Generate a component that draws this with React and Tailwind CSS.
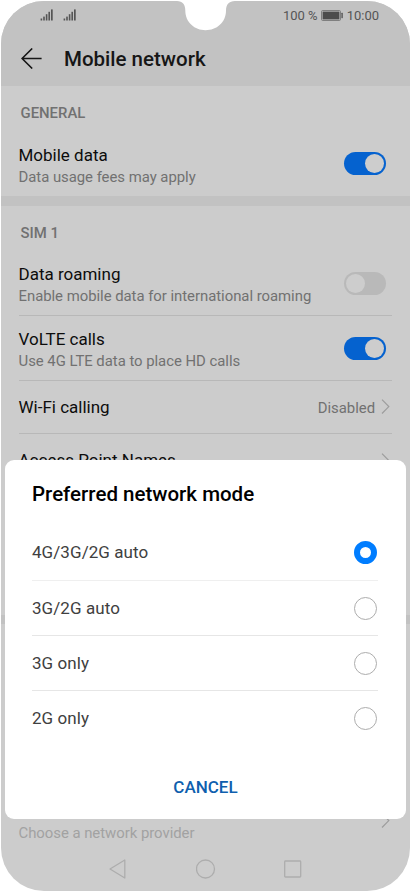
import React, { useState } from 'react'

const modes = ['4G/3G/2G auto', '3G/2G auto', '3G only', '2G only']

function Signal() {
    return (
        <svg className="w-[14px] h-3" viewBox="0 0 14 12" fill="#555">
            <rect x="0.6" y="9.5" width="1.6" height="2" />
            <rect x="3.2" y="7.6" width="1.6" height="3.9" />
            <rect x="5.8" y="5.2" width="1.6" height="6.3" />
            <rect x="8.4" y="2.8" width="1.6" height="8.7" />
            <rect x="11" y="0.4" width="1.7" height="11.1" />
        </svg>
    )
}

function Battery() {
    return (
        <svg className="w-[22px] h-[11px] ml-[3px] mr-[4px]" viewBox="0 0 22 11">
            <rect x="0.5" y="0.5" width="19" height="10" rx="1.2" fill="none" stroke="#777" strokeWidth="0.9" />
            <rect x="1.6" y="1.6" width="16.8" height="7.8" fill="#4c4c4c" />
            <rect x="20.4" y="2.8" width="1.4" height="5.4" rx="0.4" fill="#555" />
        </svg>
    )
}

function Chevron() {
    return (
        <svg className="w-[9px] h-4 mr-[2px] shrink-0" viewBox="0 0 9 16" fill="none" stroke="#9d9d9d" strokeWidth="1.2">
            <path d="M1 0.7L7.8 7.6L1 14.5" />
        </svg>
    )
}

function Toggle({ on, onClick }) {
    return (
        <button
            onClick={onClick}
            className={`flex items-center shrink-0 w-[42px] h-[23px] px-[2px] rounded-full ${on ? 'justify-end bg-[#0562cf]' : 'justify-start bg-[#b9b9b9]'}`}
        >
            <span className="w-[19px] h-[19px] rounded-full bg-[#cdcdcd]" />
        </button>
    )
}

function SwitchRow({ title, note, initial }) {
    const [on, setOn] = useState(initial)
    return (
        <div className="flex items-center justify-between h-full pr-[6px]">
            <div className="pt-[4px]">
                <div className="text-[17px] leading-[22px] text-[#0c0c0c]">{title}</div>
                <div className="text-[14.9px] leading-[22px] tracking-[-0.03px] text-[#717171] whitespace-nowrap">{note}</div>
            </div>
            <Toggle on={on} onClick={() => setOn(!on)} />
        </div>
    )
}

function Radio({ checked }) {
    return (
        <span
            className={`w-[23px] h-[23px] rounded-full ${checked ? 'border-[6px] border-[#007dff]' : 'border border-[#adadad]'}`}
        />
    )
}

export default function App() {
    const [mode, setMode] = useState(modes[0])

    return (
        <div className="w-[411px] h-[892px] bg-white p-px font-['Roboto',sans-serif]">
            <div className="relative flex flex-col w-[409px] h-[890px] bg-[#ccc] rounded-[43px] overflow-hidden">
                <header className="h-[85px] shrink-0 bg-[#c2c2c2]">
                    <div className="flex items-center justify-between h-[29px] pl-[39px] pr-[31px]">
                        <div className="flex gap-[9px] pb-px">
                            <Signal />
                            <Signal />
                        </div>
                        <div className="flex items-center text-[13px] text-[#555] whitespace-nowrap">
                            100 %
                            <Battery />
                            10:00
                        </div>
                    </div>
                    <div className="flex items-center h-[57px] pl-5">
                        <svg className="w-[21px] h-[21px]" viewBox="0 0 21 21" fill="none" stroke="#161616" strokeWidth="1.6">
                            <path d="M20.6 10.5H1M11.2 0.5L1.1 10.5L11.2 20.5" />
                        </svg>
                        <h1 className="ml-[22px] pt-[2px] text-[20.5px] font-medium text-[#161616]">Mobile network</h1>
                    </div>
                </header>

                <section className="h-[110px] shrink-0 pl-[17.5px] pr-[18px]">
                    <h2 className="h-[45px] pt-4 pl-[2px] text-[14.9px] font-medium text-[#717171]">GENERAL</h2>
                    <div className="h-[65px]">
                        <SwitchRow title="Mobile data" note="Data usage fees may apply" initial={true} />
                    </div>
                </section>
                <div className="h-[10px] shrink-0 bg-[#c2c2c2]" />

                <section className="h-[409px] shrink-0 pl-[17.5px] pr-[18px]">
                    <h2 className="h-[45px] pt-4 pl-[2px] text-[14.9px] font-medium text-[#717171]">SIM 1</h2>
                    <div className="h-[65px] border-b border-[#b8b8b8]">
                        <SwitchRow title="Data roaming" note="Enable mobile data for international roaming" initial={false} />
                    </div>
                    <div className="h-[65px] border-b border-[#b8b8b8]">
                        <SwitchRow title="VoLTE calls" note="Use 4G LTE data to place HD calls" initial={true} />
                    </div>
                    <div className="flex items-center h-[53px] border-b border-[#b8b8b8]">
                        <span className="grow pt-[2px] text-[17px] text-[#0c0c0c]">Wi-Fi calling</span>
                        <span className="mr-[6px] pt-[2px] text-[14.9px] tracking-[-0.03px] text-[#717171]">Disabled</span>
                        <Chevron />
                    </div>
                    <div className="flex items-center justify-between h-[53px]">
                        <span className="text-[17px] text-[#0c0c0c]">Access Point Names</span>
                        <Chevron />
                    </div>
                </section>
                <div className="h-[9px] shrink-0 bg-[#c2c2c2]" />

                <section className="flex items-end justify-between h-[220px] shrink-0 pl-[17.5px] pr-[18px]">
                    <span className="text-[14.9px] leading-[22px] tracking-[-0.03px] text-[#a2a2a2]">Choose a network provider</span>
                    <div className="flex h-[31px]">
                        <Chevron />
                    </div>
                </section>

                <nav className="flex items-center grow gap-[69px] pl-[107px] pt-[2px]">
                    <svg className="w-[19px] h-5" viewBox="0 0 19 20" fill="none" stroke="#adadad" strokeWidth="1.3" strokeLinejoin="round">
                        <path d="M16.8 1V19L2 10Z" />
                    </svg>
                    <svg className="w-5 h-5" viewBox="0 0 20 20" fill="none" stroke="#adadad" strokeWidth="1.3">
                        <circle cx="9.5" cy="10" r="9" />
                    </svg>
                    <svg className="-ml-px w-[18px] h-[18px]" viewBox="0 0 18 18" fill="none" stroke="#adadad" strokeWidth="1.3">
                        <rect x="0.7" y="1" width="16" height="16" rx="0.8" />
                    </svg>
                </nav>

                {/* camera notch */}
                <svg className="absolute top-0 left-[174px] w-[62px] h-[30px]" viewBox="0 0 62 30" fill="#fff">
                    <path d="M2 0C7.5 0 10.3 3.5 10.3 9.5C10.3 21.5 20 29.2 30.5 29.2C41.5 29.2 51 21.5 51 9.5C51 3.5 54 0 60 0Z" />
                </svg>

                <div className="absolute left-1 top-[459px] w-[401px] h-[359px] pl-[27px] pr-[28px] bg-white rounded-[9px]">
                    <h3 className="flex items-center h-[65px] pt-[3px] text-[20.5px] font-medium text-black">Preferred network mode</h3>
                    <div>
                        {modes.map(m => (
                            <button
                                key={m}
                                onClick={() => setMode(m)}
                                className="flex items-center justify-between w-full h-[55px] pr-[1.5px] text-[17px] tracking-[0.07px] text-[#404040] border-b border-[#e6e6e6] first:h-[56px] first:border-[#efefef] last:h-[56px] last:border-transparent"
                            >
                                <span className="pt-px">{m}</span>
                                <Radio checked={m === mode} />
                            </button>
                        ))}
                    </div>
                    <button className="block mx-auto mt-[28px] pl-px text-[17px] font-medium text-[#0f5fae]">CANCEL</button>
                </div>
            </div>
        </div>
    )
}
